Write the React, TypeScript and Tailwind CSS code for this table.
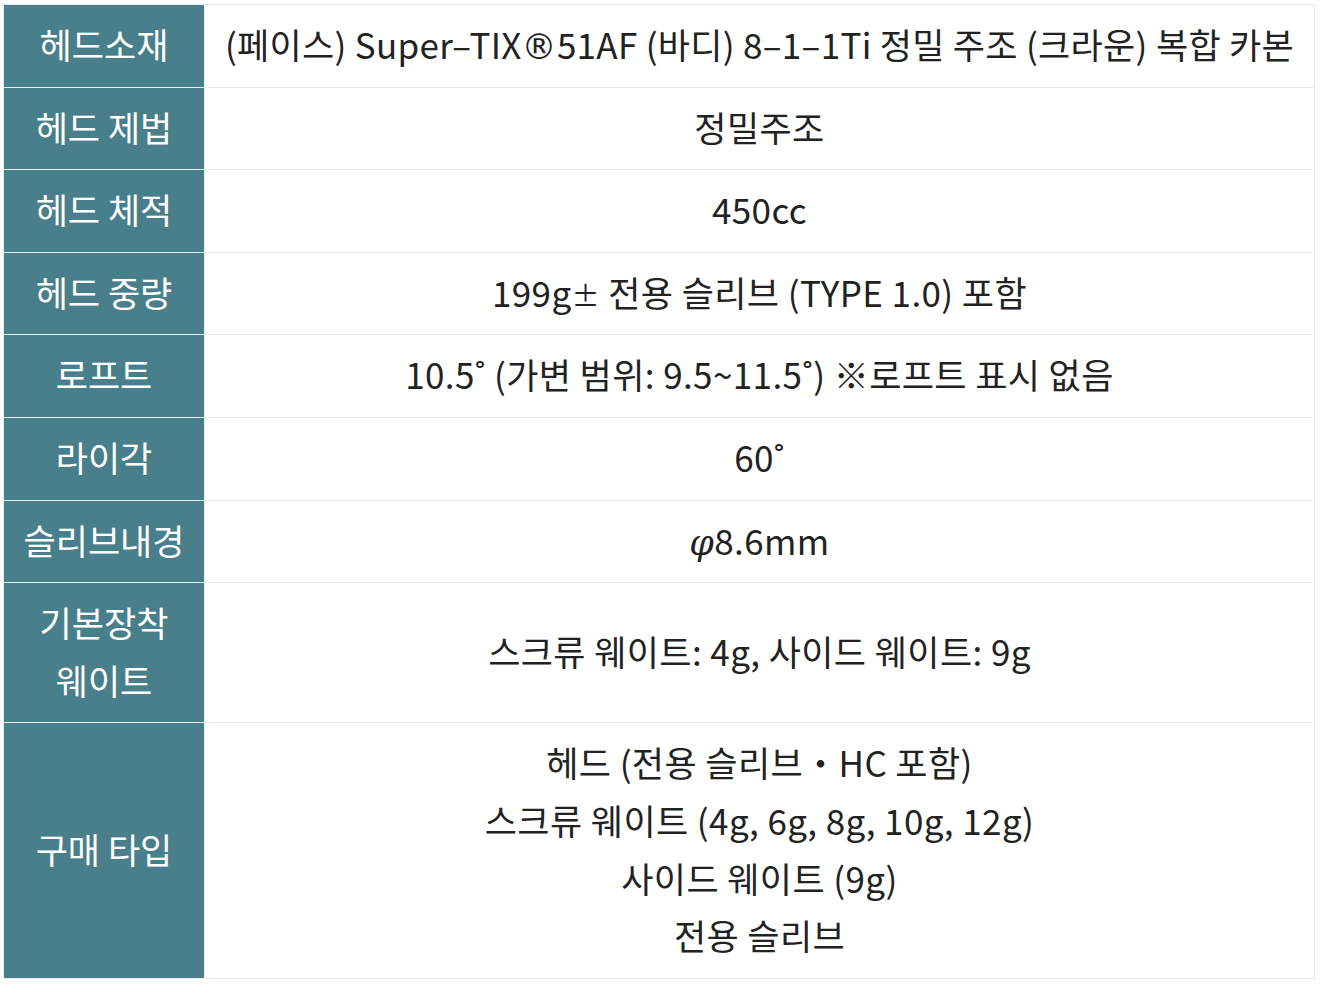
import React from 'react';

const sym = (s: string) => (
  <span className="leading-[0]" style={{ fontFamily: '"DejaVu Sans", sans-serif' }}>
    {s}
  </span>
);

const rows: { label: React.ReactNode[]; value: React.ReactNode[] }[] = [
  {
    label: ['헤드소재'],
    value: [<span className="tracking-[0.3px]">(페이스) Super–TIX{sym('®')}51AF (바디) 8–1–1Ti 정밀 주조 (크라운) 복합 카본</span>],
  },
  { label: ['헤드 제법'], value: ['정밀주조'] },
  { label: ['헤드 체적'], value: ['450cc'] },
  { label: ['헤드 중량'], value: [<>199g<span className="text-[28px] leading-[0]">±</span> 전용 슬리브 (TYPE 1.0) 포함</>] },
  { label: ['로프트'], value: ['10.5˚ (가변 범위: 9.5~11.5˚) ※로프트 표시 없음'] },
  { label: ['라이각'], value: ['60˚'] },
  {
    label: ['슬리브내경'],
    value: [<><span className="italic leading-[0]" style={{ fontFamily: '"DejaVu Serif", serif' }}>φ</span>8.6mm</>],
  },
  { label: ['기본장착', '웨이트'], value: ['스크류 웨이트: 4g, 사이드 웨이트: 9g'] },
  {
    label: ['구매 타입'],
    value: ['헤드 (전용 슬리브・HC 포함)', '스크류 웨이트 (4g, 6g, 8g, 10g, 12g)', '사이드 웨이트 (9g)', '전용 슬리브'],
  },
];

export default function App() {
  return (
    <div className="min-h-screen bg-white pl-[3px] pt-[4px]" style={{ fontFamily: '"Noto Sans CJK KR", "Noto Sans", sans-serif' }}>
      <table className="w-[1312px] table-fixed border-collapse border border-[#e8e8e8] text-[35px] leading-[57.6px]">
        <tbody>
          {rows.map((r, i) => (
            <tr key={i}>
              <th className="w-[201px] border border-[#e8eef0] bg-[#487f8b] px-0 pt-[10px] pb-[14px] text-center font-normal text-white">
                {r.label.map((l, j) => (
                  <div key={j}>{l}</div>
                ))}
              </th>
              <td className="whitespace-nowrap border border-[#e8e8e8] px-0 pt-[10px] pb-[14px] text-center tracking-[0.4px] text-[#222222]">
                {r.value.map((v, j) => (
                  <div key={j}>{v}</div>
                ))}
              </td>
            </tr>
          ))}
        </tbody>
      </table>
    </div>
  );
}
